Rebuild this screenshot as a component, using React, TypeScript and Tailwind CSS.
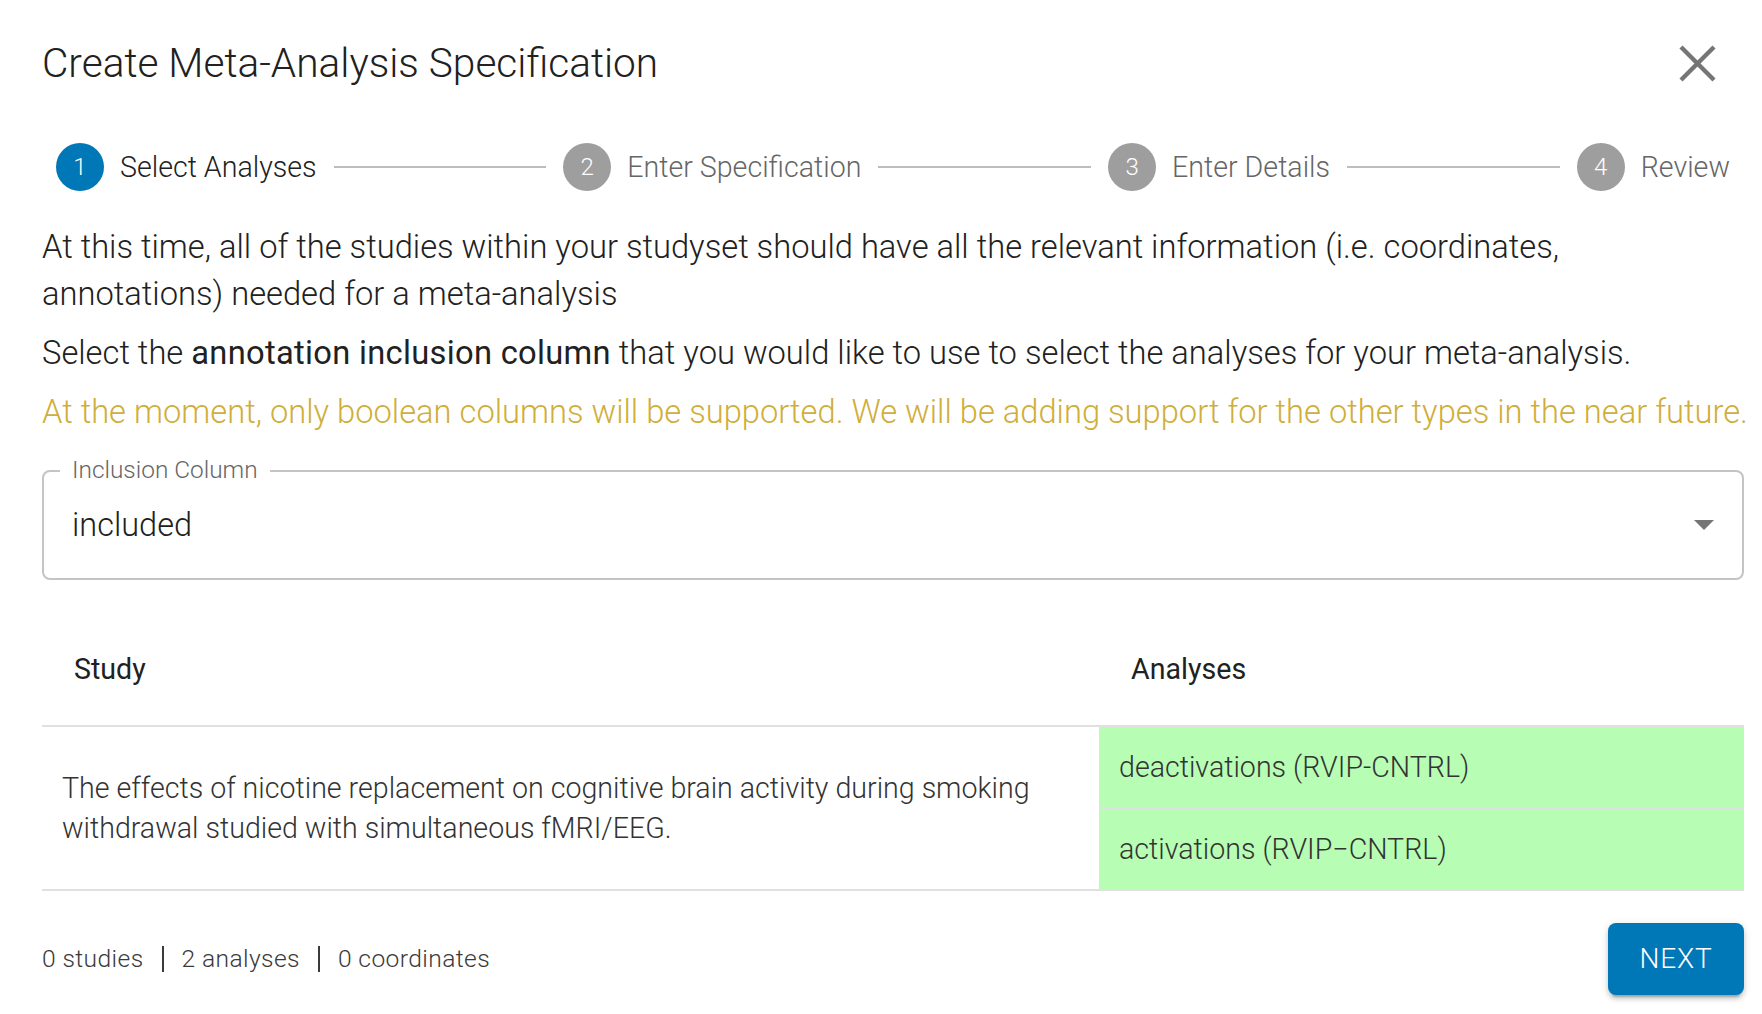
import React from "react";

const steps = ["Select Analyses", "Enter Specification", "Enter Details", "Review"];

export default function App() {
  return (
    <div className="w-[1762px] h-[1014px] bg-white font-['Roboto',sans-serif] font-light text-[#212121] pl-[42px] pr-[18px] overflow-hidden">
      {/* Header */}
      <div className="mt-[31px] h-[64px] flex items-center justify-between">
        <h1 className="text-[40.6px] leading-[64px] font-light">Create Meta-Analysis Specification</h1>
        <svg width="37" height="37" viewBox="0 0 37 37" className="mr-[28px]">
          <line x1="2" y1="2" x2="35" y2="35" stroke="#757575" strokeWidth="4.5" />
          <line x1="35" y1="2" x2="2" y2="35" stroke="#757575" strokeWidth="4.5" />
        </svg>
      </div>

      {/* Stepper */}
      <div className="mt-[48px] h-[48px] flex items-center px-[14px]">
        {steps.map((s, i) => (
          <React.Fragment key={s}>
            {i > 0 && <div className="flex-1 h-[2px] bg-[#bdbdbd] mx-[17px]" />}
            <div className="flex items-center">
              <div
                className={
                  i === 0
                    ? "w-[48px] h-[48px] rounded-full bg-[#0077b6] text-white flex items-center justify-center text-[24px]"
                    : "w-[48px] h-[48px] rounded-full bg-[#9e9e9e] text-white flex items-center justify-center text-[24px]"
                }
              >
                {i + 1}
              </div>
              <span
                className={
                  i === 0
                    ? "ml-[16px] text-[28.6px] leading-[40px] text-[#212121]"
                    : "ml-[16px] text-[28.6px] leading-[40px] text-[#666666]"
                }
              >
                {s}
              </span>
            </div>
          </React.Fragment>
        ))}
      </div>

      {/* Text */}
      <p className="mt-[33px] text-[32.7px] leading-[47px] pr-[100px]">
        At this time, all of the studies within your studyset should have all the relevant information (i.e. coordinates,
        annotations) needed for a meta-analysis
      </p>
      <p className="mt-[12px] text-[32.7px] leading-[47px]">
        Select the <span className="font-normal tracking-[0.3px]">annotation inclusion column</span> that you would like
        to use to select the analyses for your meta-analysis.
      </p>
      <p className="mt-[12px] text-[32.7px] leading-[47px] text-[#cfae3a] whitespace-nowrap">
        At the moment, only boolean columns will be supported. We will be adding support for the other types in the near
        future.
      </p>

      {/* Select */}
      <div className="relative mt-[34px] h-[110px] border-2 border-[#c4c4c4] rounded-[8px] flex items-center pl-[28px] pr-[28px]">
        <span className="absolute left-[16px] top-[-2px] -translate-y-1/2 bg-white px-[12px] text-[24.4px] leading-[28px] text-[#666666]">
          Inclusion Column
        </span>
        <span className="flex-1 text-[32.5px] leading-[48px]">included</span>
        <svg width="20" height="10" viewBox="0 0 20 10">
          <path d="M0 0 L20 0 L10 10 Z" fill="#757575" />
        </svg>
      </div>

      {/* Table */}
      <div className="mt-[33px]">
        <div className="flex border-b-2 border-[#e0e0e0]">
          <div className="w-[1057px] px-[32px] py-[32px] text-[28.6px] leading-[48px] font-normal">Study</div>
          <div className="flex-1 px-[32px] py-[32px] text-[28.6px] leading-[48px] font-normal">Analyses</div>
        </div>
        <div className="flex border-b-2 border-[#e0e0e0]">
          <div className="w-[1057px] pl-[20px] pr-[24px] flex items-center text-[28.6px] leading-[40px] text-[#333333]">
            The effects of nicotine replacement on cognitive brain activity during smoking withdrawal studied with
            simultaneous fMRI/EEG.
          </div>
          <div className="flex-1 bg-[#b7fdb3] flex flex-col">
            <div className="px-[20px] py-[20px] text-[28.6px] leading-[40px] text-[#333333] border-b-2 border-[#e0e0e0]">
              deactivations (RVIP-CNTRL)
            </div>
            <div className="px-[20px] py-[20px] text-[28.6px] leading-[40px] text-[#333333]">
              activations (RVIP−CNTRL)
            </div>
          </div>
        </div>
      </div>

      {/* Footer */}
      <div className="mt-[32px] flex items-center justify-between">
        <div className="flex items-center text-[24.6px] leading-[36px] text-[#3a3a3a] tracking-[0.4px]">
          <span>0 studies</span>
          <span className="mx-[18px] w-[2px] h-[26px] bg-[#3a3a3a]" />
          <span>2 analyses</span>
          <span className="mx-[18px] w-[2px] h-[26px] bg-[#3a3a3a]" />
          <span>0 coordinates</span>
        </div>
        <button className="w-[136px] h-[72px] rounded-[8px] bg-[#0077b6] text-white text-[28px] font-light tracking-[0.8px] shadow-[0_6px_2px_-4px_rgba(0,0,0,0.2),0_4px_4px_0_rgba(0,0,0,0.14),0_2px_10px_0_rgba(0,0,0,0.12)]">
          NEXT
        </button>
      </div>
    </div>
  );
}
